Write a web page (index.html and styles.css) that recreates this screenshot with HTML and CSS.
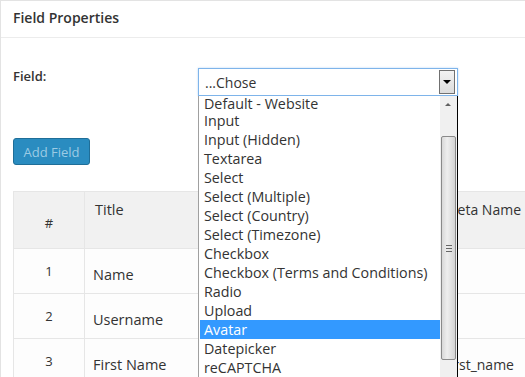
FILE: index.html
```html
<!DOCTYPE html>
<html>

<head>
    <title>Field Properties</title>
    <link rel="stylesheet" href="styles.css">
</head>

<body>
    <div class="panel">
        <div class="panel-heading">Field Properties</div>
        <div class="panel-body">
            <div class="form-row">
                <label class="field-label">Field:</label>
                <div class="select-wrap">
                    <div class="select">
                        <span>...Chose</span>
                        <span class="select-arrow"></span>
                    </div>
                    <div class="dropdown">
                        <ul class="options">
                            <li class="first">Default - Website</li>
                            <li>Input</li>
                            <li>Input (Hidden)</li>
                            <li>Textarea</li>
                            <li>Select</li>
                            <li>Select (Multiple)</li>
                            <li>Select (Country)</li>
                            <li>Select (Timezone)</li>
                            <li>Checkbox</li>
                            <li>Checkbox (Terms and Conditions)</li>
                            <li>Radio</li>
                            <li>Upload</li>
                            <li class="active">Avatar</li>
                            <li>Datepicker</li>
                            <li>reCAPTCHA</li>
                        </ul>
                        <div class="scrollbar">
                            <span class="sb-up"></span>
                            <span class="sb-thumb"><span class="grip"></span></span>
                            <span class="sb-down"></span>
                        </div>
                    </div>
                </div>
            </div>

            <button class="btn" type="button" disabled>Add Field</button>

            <table class="fields">
                <colgroup>
                    <col class="col-num">
                    <col class="col-title">
                    <col class="col-meta">
                </colgroup>
                <thead>
                    <tr>
                        <th class="num">#</th>
                        <th>Title</th>
                        <th class="meta">Meta Name</th>
                    </tr>
                </thead>
                <tbody>
                    <tr>
                        <td class="num">1</td>
                        <td>Name</td>
                        <td class="meta"></td>
                    </tr>
                    <tr>
                        <td class="num">2</td>
                        <td>Username</td>
                        <td class="meta"></td>
                    </tr>
                    <tr>
                        <td class="num">3</td>
                        <td>First Name</td>
                        <td class="meta">first_name</td>
                    </tr>
                </tbody>
            </table>
        </div>
    </div>
</body>

</html>
```

FILE: styles.css
```css
body {
    margin: 0;
    background-color: #fff;
    font-family: "Open Sans", sans-serif;
    color: #333;
    overflow: hidden;
}

.panel {
    width: 760px;
    border-left: 1px solid #e3e3e3;
    border-top: 1px solid #e3e3e3;
}

.panel-heading {
    height: 36px;
    line-height: 34px;
    padding-left: 12px;
    font-size: 14px;
    font-weight: 600;
    color: #333;
    border-bottom: 1px solid #ececec;
}

.panel-body {
    padding: 30px 12px 0 12px;
}

.form-row {
    display: flex;
    height: 28px;
}

.field-label {
    width: 185px;
    font-size: 13px;
    font-weight: 600;
    line-height: 16px;
}

.select-wrap {
    position: relative;
    width: 260px;
}

.select {
    display: flex;
    justify-content: space-between;
    align-items: center;
    height: 26px;
    border: 1px solid #7eb4ea;
    box-shadow: 0 0 2px #b9d7f5;
    font-size: 14px;
    padding-left: 6px;
}

.select-arrow {
    width: 14px;
    height: 22px;
    margin-right: 2px;
    border: 1px solid #707070;
    background: linear-gradient(#f2f2f2, #dcdcdc);
    position: relative;
}

.select-arrow::after {
    content: "";
    position: absolute;
    left: 3px;
    top: 9px;
    border-left: 4px solid transparent;
    border-right: 4px solid transparent;
    border-top: 4px solid #000;
}

.dropdown {
    position: absolute;
    top: 28px;
    left: 0;
    width: 258px;
    height: 300px;
    background-color: #fff;
    border-left: 1px solid #a0a0a0;
    border-right: 1px solid #000;
    display: flex;
}

.options {
    list-style: none;
    margin: 0;
    padding: 1px 0 0 1px;
    flex: 1;
    font-size: 14.3px;
}

.options li {
    height: 19px;
    line-height: 19px;
    padding-left: 4px;
    white-space: nowrap;
}

.options li.first {
    height: 14px;
    line-height: 14px;
}

.options li.active {
    background-color: #3399ff;
    color: #fff;
}

.scrollbar {
    width: 17px;
    background-color: #f0f0f0;
    position: relative;
}

.sb-up,
.sb-down {
    position: absolute;
    left: 5px;
    border-left: 3px solid transparent;
    border-right: 3px solid transparent;
}

.sb-up {
    top: 7px;
    border-bottom: 3px solid #606060;
}

.sb-down {
    bottom: 6px;
    border-top: 3px solid #606060;
}

.sb-thumb {
    position: absolute;
    left: 1px;
    top: 40px;
    width: 13px;
    height: 222px;
    border: 1px solid #8a8a8a;
    border-radius: 2px;
    background: linear-gradient(to right, #d8d8d8, #eeeeee 40%, #d4d4d4);
}

.grip {
    position: absolute;
    left: 4px;
    top: 108px;
    width: 6px;
    height: 5px;
    border-top: 1px solid #666;
    border-bottom: 1px solid #666;
}

.grip::after {
    content: "";
    position: absolute;
    left: 0;
    top: 2px;
    width: 6px;
    border-top: 1px solid #666;
}

.btn {
    display: block;
    margin-top: 42px;
    width: 77px;
    height: 27px;
    padding: 0;
    font-family: "Open Sans", sans-serif;
    font-size: 13px;
    color: #9ccbe4;
    background-color: #2a8cc0;
    border: 1px solid #1f6e98;
    border-radius: 3px;
}

.fields {
    margin-top: 26px;
    border-collapse: collapse;
    table-layout: fixed;
    width: 700px;
}

.col-num {
    width: 71px;
}

.col-title {
    width: 350px;
}

.fields th,
.fields td {
    border: 1px solid #e6e6e6;
    text-align: left;
    font-weight: normal;
    white-space: nowrap;
}

.fields thead tr {
    background-color: #f1f1f1;
    height: 57px;
}

.fields tbody tr {
    background-color: #fdfdfd;
    height: 45px;
}

.fields th {
    font-size: 14.5px;
    vertical-align: top;
    padding: 8px 10px 0 10px;
}

.fields th.num {
    text-align: center;
    font-size: 13px;
    vertical-align: middle;
    padding-top: 6px;
}

.fields td {
    font-size: 14.5px;
    padding: 6px 10px 0 8px;
}

.fields td.num {
    text-align: center;
    font-size: 13px;
    padding: 0 10px;
}

.fields .meta {
    font-size: 14px;
    padding-left: 10px;
}
```
